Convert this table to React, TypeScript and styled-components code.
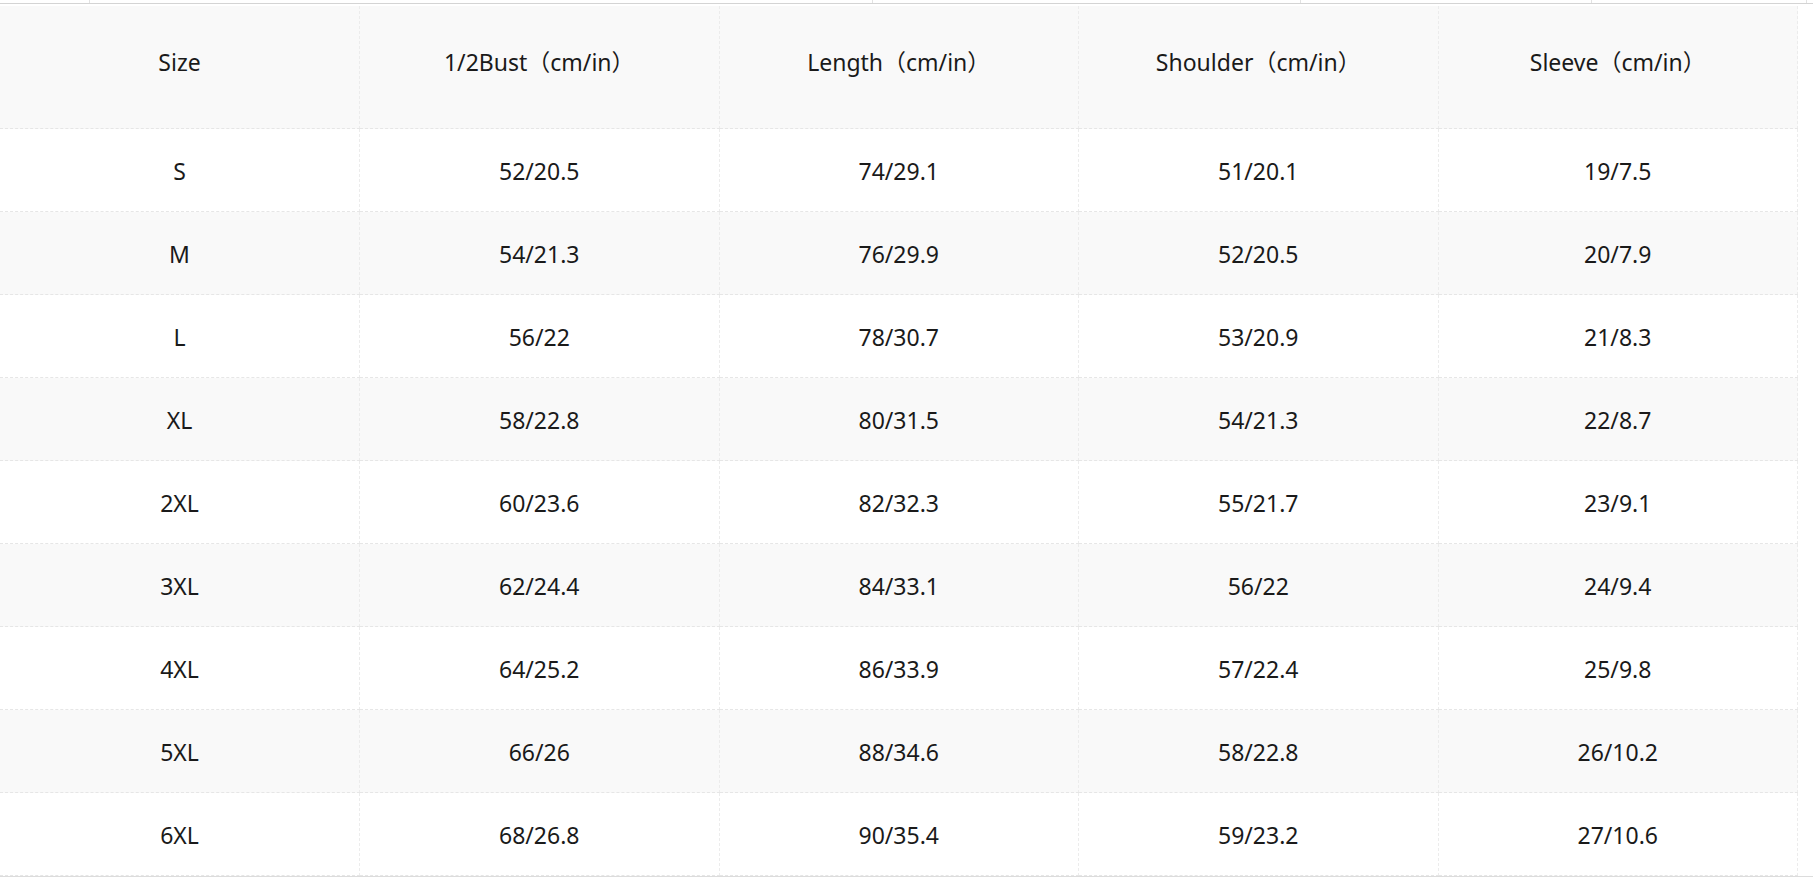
import styled, { createGlobalStyle } from 'styled-components';

const GlobalStyle = createGlobalStyle`
  html, body {
    margin: 0;
    padding: 0;
    background: #ffffff;
  }
  body {
    font-family: 'Noto Sans', 'Noto Sans CJK SC', sans-serif;
    color: #1a1a1a;
  }
`;

const Page = styled.div`
  width: 1813px;
  height: 882px;
  overflow: hidden;
  background: #ffffff;
`;

const TopRule = styled.div`
  display: flex;
  height: 3px;
  border-bottom: 1px solid #d4d4d4;
  margin-bottom: 2px;
`;

const Tick = styled.span<{ $at: number }>`
  width: ${p => p.$at}px;
  flex: none;
  border-right: 1px solid #e2e2e2;
`;

const SizeTable = styled.table`
  width: 1798px;
  table-layout: fixed;
  border-collapse: collapse;
  font-size: 23px;
  line-height: 1.2;
`;

const HeadCell = styled.th`
  height: 114px;
  padding: 0 0 8px;
  font-weight: 400;
  text-align: center;
  background: #f9f9f9;
  border-right: 1px dashed #ececec;
  border-bottom: 1px dashed #e6e6e6;
`;

const Row = styled.tr<{ $shaded: boolean }>`
  background: ${p => (p.$shaded ? '#f9f9f9' : '#ffffff')};
`;

const Cell = styled.td`
  height: 79px;
  padding: 3px 0 0;
  text-align: center;
  border-right: 1px dashed #ececec;
  border-bottom: 1px dashed #e6e6e6;
`;

const BottomRule = styled.div`
  border-top: 1px solid #dcdcdc;
`;

const headers = [
  'Size',
  '1/2Bust（cm/in）',
  'Length（cm/in）',
  'Shoulder（cm/in）',
  'Sleeve（cm/in）',
];

const rows = [
  ['S', '52/20.5', '74/29.1', '51/20.1', '19/7.5'],
  ['M', '54/21.3', '76/29.9', '52/20.5', '20/7.9'],
  ['L', '56/22', '78/30.7', '53/20.9', '21/8.3'],
  ['XL', '58/22.8', '80/31.5', '54/21.3', '22/8.7'],
  ['2XL', '60/23.6', '82/32.3', '55/21.7', '23/9.1'],
  ['3XL', '62/24.4', '84/33.1', '56/22', '24/9.4'],
  ['4XL', '64/25.2', '86/33.9', '57/22.4', '25/9.8'],
  ['5XL', '66/26', '88/34.6', '58/22.8', '26/10.2'],
  ['6XL', '68/26.8', '90/35.4', '59/23.2', '27/10.6'],
];

// little column stubs of the table above, cut off at the top edge
const ticks = [89, 782, 427, 290, 214];

export default function App() {
  return (
    <Page>
      <GlobalStyle />
      <TopRule>
        {ticks.map((t, i) => (
          <Tick key={i} $at={t} />
        ))}
      </TopRule>
      <SizeTable>
        <thead>
          <tr>
            {headers.map(h => (
              <HeadCell key={h}>{h}</HeadCell>
            ))}
          </tr>
        </thead>
        <tbody>
          {rows.map((r, i) => (
            <Row key={r[0]} $shaded={i % 2 === 1}>
              {r.map((v, j) => (
                <Cell key={j}>{v}</Cell>
              ))}
            </Row>
          ))}
        </tbody>
      </SizeTable>
      <BottomRule />
    </Page>
  );
}
